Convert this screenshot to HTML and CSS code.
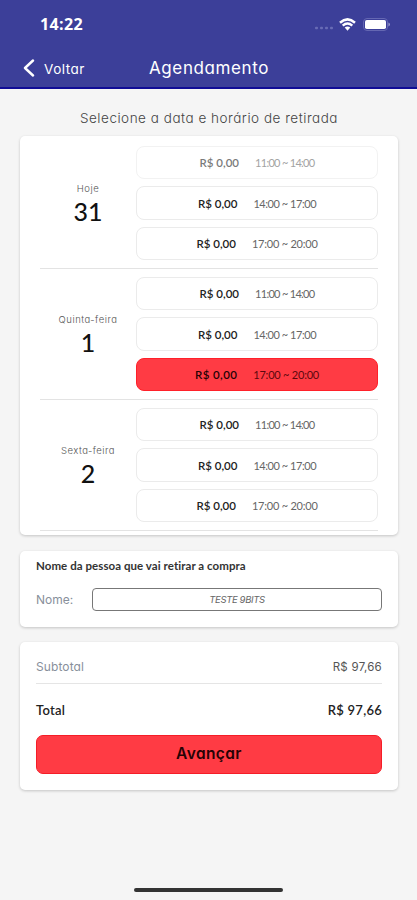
FILE: index.html
```html
<!DOCTYPE html>
<html lang="pt-BR">
<head>
<meta charset="utf-8">
<title>Agendamento</title>
<link rel="stylesheet" href="styles.css">
</head>
<body>
<header class="header">
  <div class="status">
    <span class="clock">14:22</span>
    <div class="indicators">
      <svg class="signal" width="20" height="4" viewBox="0 0 20 4"><g fill="#686bb5"><rect x="1" y="0.8" width="3" height="2.4" rx="1"/><rect x="6" y="0.8" width="3" height="2.4" rx="1"/><rect x="11" y="0.8" width="3" height="2.4" rx="1"/><rect x="16" y="0.8" width="3" height="2.4" rx="1"/></g></svg>
      <svg class="wifi" width="17" height="13" viewBox="0 0 17 13"><g fill="none" stroke="#fff" stroke-width="2.5"><path d="M1 4.7Q8.500-1.900 16 4.700"/><path d="M3.700 7.600Q8.500 3.500 13.300 7.600"/></g><path fill="#fff" d="M5.700 9.600Q8.500 7.400 11.300 9.600L8.500 12.700Z"/></svg>
      <svg class="battery" width="28" height="13" viewBox="0 0 28 13"><rect x="0.500" y="0.500" width="24" height="12" rx="3.500" fill="none" stroke="#6467b2"/><rect x="2" y="2" width="21" height="9" rx="1.800" fill="#fff"/><path d="M25.500 4.500v4q1.300-.6 1.300-2t-1.300-2" fill="#a5a7d8"/></svg>
    </div>
  </div>
  <nav class="nav">
    <span class="back"><svg width="12" height="18" viewBox="0 0 12 18"><path d="M10 1.500 2 9l8 7.500" fill="none" stroke="#fff" stroke-width="2.400" stroke-linecap="round" stroke-linejoin="round"/></svg><span class="back-label">Voltar</span></span>
    <h1 class="title">Agendamento</h1>
    <span></span>
  </nav>
</header>
<main class="content">
  <h2 class="prompt">Selecione a data e horário de retirada</h2>
  <section class="card schedule">
    <div class="day">
      <div class="date"><span class="weekday">Hoje</span><span class="num">31</span></div>
      <div class="slots">
        <div class="slot disabled"><span class="price">R$ 0,00</span><span class="time t1">11:00 ~ 14:00</span></div>
        <div class="slot"><span class="price">R$ 0,00</span><span class="time t2">14:00 ~ 17:00</span></div>
        <div class="slot"><span class="price">R$ 0,00</span><span class="time t3">17:00 ~ 20:00</span></div>
      </div>
    </div>
    <div class="day">
      <div class="date"><span class="weekday">Quinta-feira</span><span class="num">1</span></div>
      <div class="slots">
        <div class="slot"><span class="price">R$ 0,00</span><span class="time t1">11:00 ~ 14:00</span></div>
        <div class="slot"><span class="price">R$ 0,00</span><span class="time t2">14:00 ~ 17:00</span></div>
        <div class="slot selected"><span class="price">R$ 0,00</span><span class="time t3">17:00 ~ 20:00</span></div>
      </div>
    </div>
    <div class="day">
      <div class="date"><span class="weekday">Sexta-feira</span><span class="num">2</span></div>
      <div class="slots">
        <div class="slot"><span class="price">R$ 0,00</span><span class="time t1">11:00 ~ 14:00</span></div>
        <div class="slot"><span class="price">R$ 0,00</span><span class="time t2">14:00 ~ 17:00</span></div>
        <div class="slot"><span class="price">R$ 0,00</span><span class="time t3">17:00 ~ 20:00</span></div>
      </div>
    </div>
  </section>
  <section class="card person">
    <h3 class="person-title">Nome da pessoa que vai retirar a compra</h3>
    <div class="field"><span class="label">Nome:</span><div class="input"><span>TESTE 9BITS</span></div></div>
  </section>
  <section class="card summary">
    <div class="line subtotal"><span>Subtotal</span><span class="amount">R$ 97,66</span></div>
    <div class="line total"><span>Total</span><span class="amount">R$ 97,66</span></div>
    <div class="submit"><span>Avançar</span></div>
  </section>
</main>
<footer class="home"><div class="home-bar"></div></footer>
</body>
</html>
```
FILE: styles.css
```css
* { box-sizing: border-box; }
body {
  margin: 0;
  height: 900px;
  display: flex;
  flex-direction: column;
  overflow: hidden;
  background: #f5f5f5;
  color: #111;
  font-family: Inter, "Open Sans", sans-serif;
  font-feature-settings: "cv11";
}
h1, h2, h3 { margin: 0; font-weight: 400; }
span, h1, h2, h3 { white-space: nowrap; }
.header {
  height: 89px;
  padding-top: 10px;
  background: #3c3f99;
  border-bottom: 2px solid #100c96;
  color: #fff;
}
.status { height: 28px; padding: 0 26px 0 40px; display: flex; justify-content: space-between; align-items: center; }
.clock { font: 700 16px/28px "Open Sans", sans-serif; letter-spacing: 0.4px; }
.indicators { display: flex; align-items: center; gap: 5px; }
.signal { margin-top: 8px; }
.wifi { margin-right: 2px; }
.nav { height: 40px; margin-top: 10px; padding-left: 23px; display: grid; grid-template-columns: 104px 164px 1fr; align-items: center; }
.back { display: flex; align-items: center; gap: 9px; }
.back-label { font-size: 13.5px; letter-spacing: 0.5px; padding-top: 2px; }
.title { font-size: 17px; text-align: center; letter-spacing: 0.6px; }
.content { padding: 0 19px 0 20px; }
.prompt { height: 47px; padding-top: 12px; font-size: 13.5px; line-height: 34px; text-align: center; color: #444; letter-spacing: 0.52px; font-weight: 300; }
.card { background: #fff; border-radius: 5px; box-shadow: 0 1px 3px rgba(0, 0, 0, 0.2); }
.schedule { height: 399px; padding: 2px 20px 0; }
.day { height: 131px; display: flex; align-items: center; border-bottom: 1px solid #e3e3e3; }
.date { width: 96px; display: flex; flex-direction: column; align-items: center; padding-top: 2px; }
.weekday { font-size: 9.5px; line-height: 14px; color: #555; letter-spacing: 0.5px; font-weight: 300; }
.num { font: 500 25px/30px Lato, sans-serif; color: #111; }
.slots { flex: 1; display: flex; flex-direction: column; gap: 7px; }
.slot { height: 33.500px; border: 1px solid #ebebeb; border-radius: 8px; display: flex; align-items: center; justify-content: center; gap: 16px; }
.price { font: 600 11.500px Lato, sans-serif; color: #222; }
.time { font: 400 11px Lato, sans-serif; color: #666; }
.t1 { letter-spacing: -0.7px; }
.t2 { letter-spacing: -0.45px; }
.t3 { letter-spacing: -0.22px; }
.disabled { opacity: 0.6; }
.selected { background: #ff3b44; border-color: #ff2029; }
.selected .price { color: #260204; letter-spacing: 0.4px; }
.selected .time { color: #5c080d; }
.person { height: 76px; margin-top: 16px; padding: 7px 16px 0; }
.person-title { font: 700 11.500px/16px Lato, sans-serif; letter-spacing: 0.06px; color: #333; }
.field { display: flex; align-items: center; margin-top: 14px; }
.label { width: 56px; font-size: 12px; color: #88909b; }
.input { flex: 1; height: 23px; border: 1px solid #777; border-radius: 4px; display: flex; align-items: center; justify-content: center; font-size: 9.500px; font-style: italic; letter-spacing: -0.35px; color: #666; }
.summary { height: 148px; margin-top: 15px; padding: 8px 16px 0; }
.line { display: flex; justify-content: space-between; align-items: center; }
.subtotal { height: 34px; border-bottom: 1px solid #e5e5e5; font-size: 12px; letter-spacing: 0.1px; color: #88909b; }
.subtotal .amount { color: #555; font-size: 11.500px; letter-spacing: 0.25px; }
.total { height: 51px; font: 600 13px Lato, sans-serif; letter-spacing: 0.25px; color: #222; }
.submit { height: 39px; background: #ff3b44; border: 1px solid #f51d27; border-radius: 7px; display: flex; align-items: center; justify-content: center; font-size: 15.5px; font-weight: 600; letter-spacing: 0.4px; color: #260204; padding-bottom: 2px; }
.home { margin-top: auto; height: 12px; }
.home-bar { width: 149px; height: 4px; margin: 0 auto; border-radius: 2px; background: #333; }
```
